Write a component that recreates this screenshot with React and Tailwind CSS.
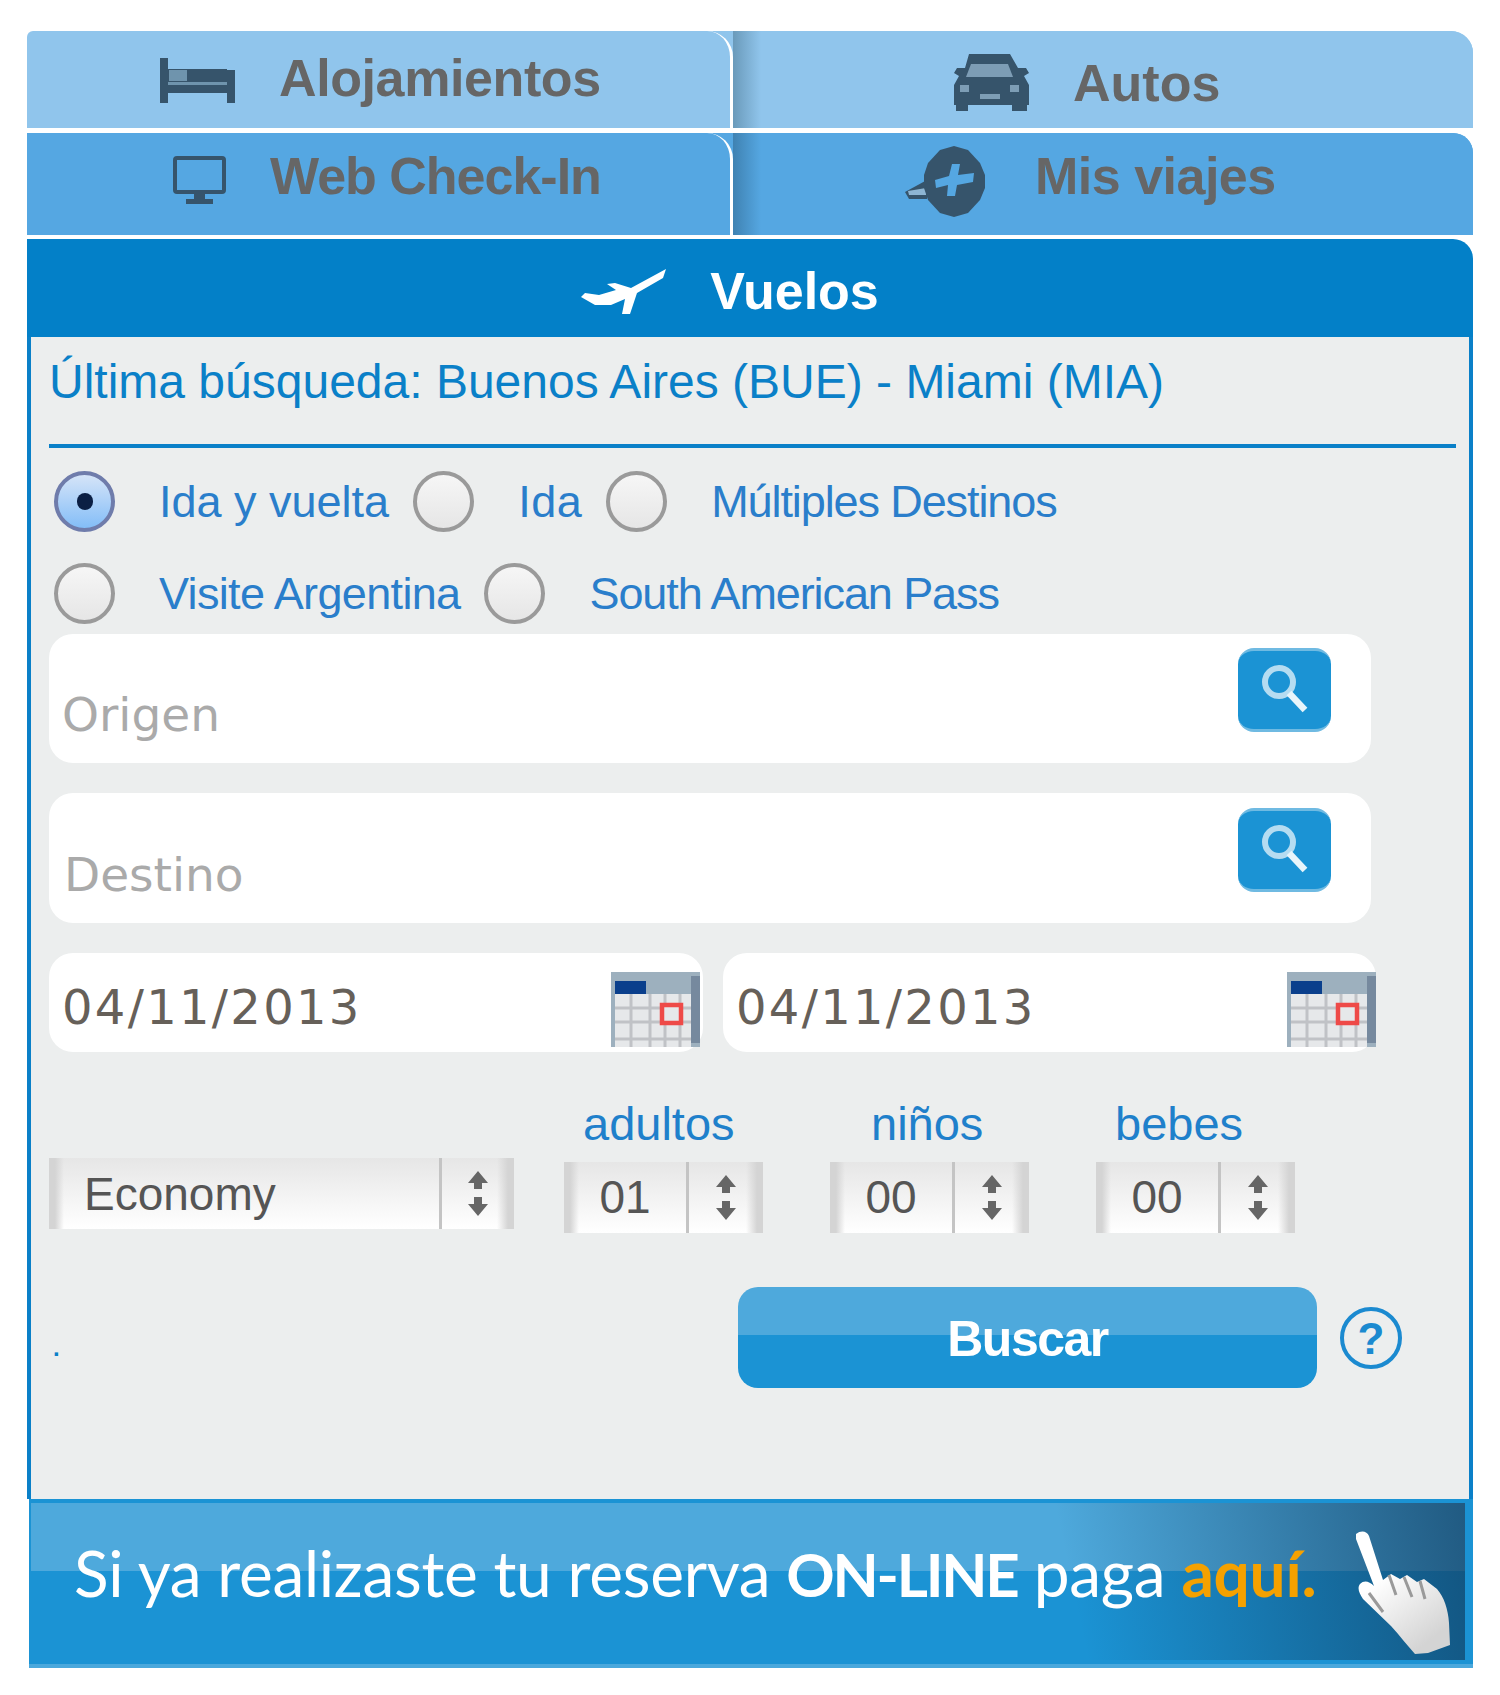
function BedIcon() {
    return (
        <svg width="75" height="45" viewBox="0 0 75 45" className="shrink-0 mt-[4px]">
            <path d="M0 0h8v24h59V12h8v33h-8V35H8v10H0z" fill="#36546b" />
            <rect x="8" y="11" width="59" height="13" fill="#36546b" />
            <rect x="9" y="12" width="18" height="11" fill="#6f94ad" />
            <rect x="8" y="24" width="59" height="3" fill="#6f94ad" />
        </svg>
    );
}

function MonitorIcon() {
    return (
        <svg width="53" height="48" viewBox="0 0 53 48" className="shrink-0 mt-[8px]">
            <rect x="2" y="2" width="49" height="34" rx="2" fill="none" stroke="#36546b" strokeWidth="4" />
            <rect x="21" y="37" width="11" height="7" fill="#36546b" />
            <rect x="13" y="43" width="27" height="5" fill="#36546b" />
        </svg>
    );
}

function CarIcon() {
    return (
        <svg width="79" height="57" viewBox="0 0 79 57" className="shrink-0">
            <path d="M19 0h41l8 14h8l3 5-5 3 5 9v20h-2v6H62v-6H18v6H6v-6H4V31l5-9-5-3 3-5h8z" fill="#36546b" />
            <path d="M21 10h37l5 13H16z" fill="#7d9db5" />
            <rect x="10" y="31" width="9" height="7" fill="#7d9db5" />
            <rect x="60" y="31" width="9" height="7" fill="#7d9db5" />
            <rect x="30" y="40" width="20" height="5" fill="#7d9db5" />
        </svg>
    );
}

function TripsIcon() {
    return (
        <svg width="80" height="71" viewBox="0 0 80 71" className="shrink-0 mt-[10px]">
            <path d="M0 46l22-12v19H4z" fill="#36546b" />
            <path d="M3 45l18-3v7H4z" fill="#8db5d3" />
            <path d="M49 0l14 4 12 13 5 12v13l-5 12-12 13-14 4-14-4-12-13-4-12V29l4-12L35 4z" fill="#36546b" />
            <path d="M47 18h8l-2 11 16-2-1 9-16 3-2 11h-8l1-11-12 3-1-8 14-4z" fill="#55a7e2" />
        </svg>
    );
}

function PlaneIcon() {
    return (
        <svg width="85" height="45" viewBox="0 0 85 45" className="shrink-0">
            <path d="M85 0l-3 9-26 15-7 21h-8l3-15-14 6H14L0 28l4-4 14 2 17-5-9-6 8-1 16 5z" fill="#ffffff" />
        </svg>
    );
}

function SearchButton() {
    return (
        <div className="w-[93px] h-[84px] shrink-0 rounded-[16px] bg-[#1b93d4] border-y-[3px] border-[#6fbae2] flex items-center justify-center">
            <svg width="50" height="54" viewBox="0 0 50 54" className="ml-[1px]">
                <circle cx="19" cy="19" r="14" fill="none" stroke="#b5dcf1" strokeWidth="6" />
                <path d="M29 30l16 17" stroke="#e8f5fb" strokeWidth="6.5" />
            </svg>
        </div>
    );
}

function CalendarIcon() {
    return (
        <svg width="89" height="75" viewBox="0 0 89 75" className="shrink-0">
            <rect width="89" height="75" fill="#9db0be" />
            <rect x="4" y="9" width="31" height="13" fill="#0a3f8c" />
            <rect x="80" y="4" width="9" height="67" fill="#76899e" />
            <rect x="4" y="22" width="76" height="53" fill="#e6e8ea" />
            <path d="M20 22v53M39 22v53M54 22v53M69 22v53M4 36h76M4 50h76M4 67h76" stroke="#c0c2c6" strokeWidth="3" />
            <rect x="51" y="33" width="19" height="18" fill="#e6e8ea" stroke="#ee4a48" strokeWidth="4.5" />
        </svg>
    );
}

function Arrows() {
    return (
        <svg width="20" height="45" viewBox="0 0 20 45">
            <path d="M10 0l10 12h-6v6H6v-6H0zM6 26h8v7h6L10 45 0 33h6z" fill="#666666" />
        </svg>
    );
}

function Radio({ checked }) {
    if (checked) {
        return (
            <span className="w-[61px] h-[61px] shrink-0 rounded-full border-[4px] border-[#6f7cab] bg-gradient-to-b from-[#d5e4f8] to-[#83bdf7] flex items-center justify-center">
                <span className="w-[16px] h-[17px] rounded-full bg-[#0b1f44]" />
            </span>
        );
    }
    return <span className="w-[61px] h-[61px] shrink-0 rounded-full border-[4px] border-[#9a9a9a] bg-gradient-to-b from-[#f6f6f6] to-[#e6e6e6]" />;
}

function Option({ label, checked, labelClass }) {
    return (
        <div className="flex items-center">
            <Radio checked={checked} />
            <span className={`ml-[44px] text-[45px] leading-[50px] text-[#2a7ecb] whitespace-nowrap ${labelClass}`}>{label}</span>
        </div>
    );
}

function Stepper({ value, label, labelClass }) {
    return (
        <div className="w-[199px] shrink-0">
            <div className={`h-[40px] mb-[17px] text-[47px] leading-[38px] text-[#1f80cb] whitespace-nowrap ${labelClass}`}>{label}</div>
            <div className="h-[71px] flex bg-[linear-gradient(to_right,#d4d4d4,#d4d4d4_6px,transparent_15px),linear-gradient(to_left,#d4d4d4,#d4d4d4_6px,transparent_17px),linear-gradient(to_bottom,#e6e6e6,#ffffff)] text-[46px] leading-[71px] text-[#555555]">
                <div className="w-[125px] border-r-[3px] border-[#c4c4c4] text-center">{value}</div>
                <div className="flex-1 flex items-center justify-center">
                    <Arrows />
                </div>
            </div>
        </div>
    );
}

function HandIcon() {
    return (
        <svg width="106" height="124" viewBox="0 0 106 124" className="shrink-0">
            <defs>
                <linearGradient id="handFill" x1="0" y1="0" x2="0.6" y2="1">
                    <stop offset="0.4" stopColor="#ffffff" />
                    <stop offset="1" stopColor="#d4d4d4" />
                </linearGradient>
            </defs>
            <path
                d="M4 3c5-4 11-3 13 2l14 44 8-6 9 5 7-4 10 7 7-3 13 10c7 8 11 20 12 34l1 22-22 8-13 1c-8-9-15-18-24-28L11 68C7 62 5 57 8 53c4-4 9-3 14 2L4 8z"
                fill="url(#handFill)"
            />
            <path d="M37 44l7 20M52 46l8 20M68 50l5 18M17 62l14 19" stroke="#9a9a9a" strokeWidth="3" fill="none" />
        </svg>
    );
}

export default function App() {
    return (
        <div className="w-[1500px] h-[1695px] bg-white pt-[31px] pl-[27px] font-['Liberation_Sans',sans-serif]">
            <div className="w-[1446px]">
                {/* tabs */}
                <div className="flex h-[97px] bg-[#90c5ec] rounded-tl-[6px] rounded-tr-[22px] overflow-hidden text-[#666666] text-[52px] font-bold">
                    <div className="w-[706px] flex items-center pl-[133px] pb-[3px] gap-[44px] tracking-[-0.4px] rounded-tr-[26px] border-r-[3px] border-white">
                        <BedIcon />
                        <span>Alojamientos</span>
                    </div>
                    <div className="flex-1 flex items-center pl-[217px] pt-[6px] gap-[44px] bg-[linear-gradient(to_right,#6a9aba,#90c5ec_28px)]">
                        <CarIcon />
                        <span>Autos</span>
                    </div>
                </div>
                <div className="flex h-[102px] mt-[5px] bg-[#55a7e2] rounded-tr-[20px] overflow-hidden text-[#666666] text-[52px] font-bold">
                    <div className="w-[706px] flex items-center pl-[146px] pb-[16px] gap-[44px] tracking-[-1px] rounded-tr-[26px] border-r-[3px] border-white">
                        <MonitorIcon />
                        <span>Web Check-In</span>
                    </div>
                    <div className="flex-1 flex items-center pl-[172px] pb-[16px] gap-[50px] tracking-[-0.5px] bg-[linear-gradient(to_right,#3f82b2,#55a7e2_28px)]">
                        <TripsIcon />
                        <span>Mis viajes</span>
                    </div>
                </div>
                <div className="h-[98px] mt-[4px] bg-[#0380c8] rounded-tr-[20px] flex items-center justify-center gap-[44px] pt-[6px] pr-[40px] text-white text-[52px] font-bold">
                    <PlaneIcon />
                    <span>Vuelos</span>
                </div>

                {/* form */}
                <div className="h-[1162px] bg-[#eceeee] border-x-[4px] border-[#0a80c8] pl-[18px]">
                    <div className="h-[107px] pt-[20px] text-[48px] leading-[50px] text-[#0a80c8] whitespace-nowrap">
                        Última búsqueda: Buenos Aires (BUE) - Miami (MIA)
                    </div>
                    <div className="w-[1407px] h-[4px] bg-[#0a80c8]" />

                    <div className="mt-[23px] ml-[5px] flex items-center gap-[24px]">
                        <Option label="Ida y vuelta" checked />
                        <Option label="Ida" labelClass="tracking-[0.5px]" />
                        <Option label="Múltiples Destinos" labelClass="tracking-[-1.1px]" />
                    </div>
                    <div className="mt-[31px] ml-[5px] flex items-center gap-[24px]">
                        <Option label="Visite Argentina" labelClass="tracking-[-0.65px]" />
                        <Option label="South American Pass" labelClass="tracking-[-1.1px]" />
                    </div>

                    <div className="mt-[10px] w-[1322px] h-[129px] bg-white rounded-[24px] flex justify-between pl-[13px] pr-[40px] pt-[14px]">
                        <span className="font-['DejaVu_Sans',sans-serif] text-[47px] leading-[56px] mt-[39px] text-[#aaaaaa]">Origen</span>
                        <SearchButton />
                    </div>
                    <div className="mt-[30px] w-[1322px] h-[130px] bg-white rounded-[24px] flex justify-between pl-[15px] pr-[40px] pt-[15px]">
                        <span className="font-['DejaVu_Sans',sans-serif] text-[47px] leading-[56px] mt-[39px] text-[#aaaaaa]">Destino</span>
                        <SearchButton />
                    </div>

                    <div className="mt-[30px] flex gap-[20px]">
                        <div className="w-[654px] h-[99px] bg-white rounded-[24px] flex justify-between pl-[13px] pr-[3px]">
                            <span className="font-['DejaVu_Sans',sans-serif] text-[48px] leading-[99px] pt-[5px] tracking-[2.3px] text-[#666059]">04/11/2013</span>
                            <div className="mt-[19px]"><CalendarIcon /></div>
                        </div>
                        <div className="w-[653px] h-[99px] bg-white rounded-[24px] flex justify-between pl-[13px]">
                            <span className="font-['DejaVu_Sans',sans-serif] text-[48px] leading-[99px] pt-[5px] tracking-[2.3px] text-[#666059]">04/11/2013</span>
                            <div className="mt-[19px]"><CalendarIcon /></div>
                        </div>
                    </div>

                    <div className="flex items-start">
                        <div className="mt-[106px] w-[465px] h-[71px] shrink-0 flex bg-[linear-gradient(to_right,#d4d4d4,#d4d4d4_6px,transparent_15px),linear-gradient(to_left,#d4d4d4,#d4d4d4_6px,transparent_17px),linear-gradient(to_bottom,#e6e6e6,#ffffff)] text-[46px] leading-[73px] text-[#555555]">
                            <div className="w-[393px] border-r-[3px] border-[#c4c4c4] pl-[35px]">Economy</div>
                            <div className="flex-1 flex items-center justify-center">
                                <Arrows />
                            </div>
                        </div>
                        <div className="mt-[53px] ml-[50px] flex gap-[67px]">
                            <Stepper value="01" label="adultos" labelClass="pl-[19px]" />
                            <Stepper value="00" label="niños" labelClass="pl-[41px]" />
                            <Stepper value="00" label="bebes" labelClass="pl-[19px]" />
                        </div>
                    </div>

                    <div className="mt-[54px] flex items-center">
                        <span className="w-[689px] pl-[4px] pt-[20px] text-[#0a80c8] text-[24px] leading-[24px] font-bold">.</span>
                        <button className="w-[579px] h-[101px] pt-[3px] rounded-[20px] bg-[linear-gradient(to_bottom,#4ea9dc_0%,#4ea9dc_48%,#1b93d4_48%,#1b93d4_100%)] text-white text-[50px] tracking-[-1.5px] font-bold">
                            Buscar
                        </button>
                        <span className="ml-[23px] w-[62px] h-[62px] rounded-full border-[4px] border-[#1b8ad0] text-[#1b8ad0] text-[44px] leading-[56px] font-bold text-center">?</span>
                    </div>
                </div>

                {/* banner */}
                <div className="h-[169px] ml-[2px] border-t-[4px] border-b-[4px] border-t-[#1b93d4] border-b-[#4aa8dc] bg-[#1b93d4] pl-[2px] pr-[8px] pb-[4px]">
                    <div className="h-full flex justify-between pl-[43px] pr-[7px] text-white bg-[linear-gradient(78deg,transparent_72%,rgba(15,60,95,0.72)_100%),linear-gradient(to_bottom,#4ea9dc_0%,#4ea9dc_43%,#1b93d4_43%,#1b93d4_100%)]">
                        <span className="font-['Lato',sans-serif] text-[64px] leading-[70px] mt-[35px] tracking-[-0.3px] whitespace-nowrap">
                            Si ya realizaste tu reserva <b className="text-[60px] tracking-[-2.2px]">ON-LINE</b> paga <b className="text-[#f5a100]">aquí.</b>
                        </span>
                        <div className="mt-[28px]"><HandIcon /></div>
                    </div>
                </div>
            </div>
        </div>
    );
}
